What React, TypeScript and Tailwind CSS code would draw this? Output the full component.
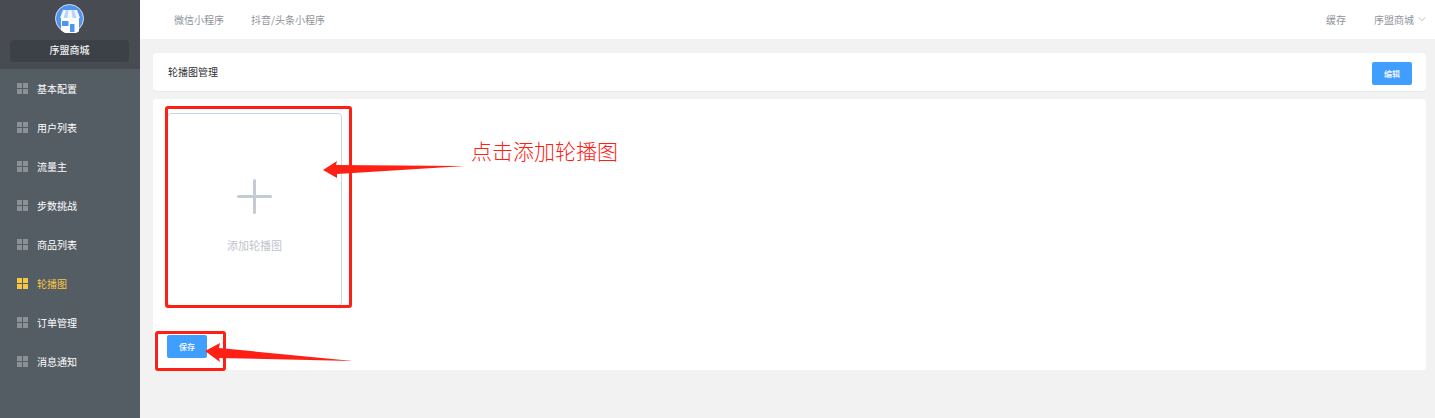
const cjk = "font-['Noto_Sans_CJK_SC','Liberation_Sans',sans-serif]";

const menu = ["基本配置", "用户列表", "流量主", "步数挑战", "商品列表", "轮播图", "订单管理", "消息通知"];

function GridIcon({ active }: { active: boolean }) {
  const cell = active ? "bg-[#f7c744]" : "bg-[#8c9197]";
  return (
    <span className="grid h-[11px] w-[11px] grid-cols-2 gap-px">
      <i className={cell} />
      <i className={cell} />
      <i className={cell} />
      <i className={cell} />
    </span>
  );
}

function Logo() {
  return (
    <svg viewBox="0 0 29 29" className="block h-[29px] w-[29px]">
      <circle cx="14.5" cy="14.5" r="14" fill="#4f94ee" stroke="#d8dde3" strokeWidth="1" />
      <path d="M6 14h18v13.300a14 14 0 0 1-18-1z" fill="#ffffff" />
      <path d="M8 6h14l3 8H5z" fill="#f4f7fd" />
      <path d="M11 6h2.500l-1 8H8.500zM16.500 6H19l2.500 8h-4z" fill="#bcd4f7" />
      <rect x="7" y="17" width="6.500" height="5" fill="#4f94ee" />
      <rect x="15" y="20" width="4.500" height="8" fill="#4f94ee" />
    </svg>
  );
}

function Sidebar() {
  return (
    <aside className="flex w-[140px] shrink-0 flex-col bg-[#545c64]">
      <div className="flex h-[69px] flex-col bg-[#484c52] pl-[10px] pt-1">
        <div className="ml-[45px]">
          <Logo />
        </div>
        <div className="mt-[7px] flex h-[22px] w-[119px] items-center justify-center rounded-sm bg-[#3c4047] pb-[3px] text-[10px] font-medium text-[#f0f0f0]">
          序盟商城
        </div>
      </div>
      <nav className="flex flex-col">
        {menu.map((name) => {
          const active = name === "轮播图";
          return (
            <div
              key={name}
              className={`flex h-[39px] items-center gap-[9px] pl-[17px] text-[10px] ${active ? "text-[#f7c744]" : "text-white"}`}
            >
              <GridIcon active={active} />
              <span>{name}</span>
            </div>
          );
        })}
      </nav>
    </aside>
  );
}

function TopBar() {
  return (
    <header className="flex h-[39px] items-center bg-white pb-px pl-[34px] pr-[9px] text-[10px] text-[#909399]">
      <span>微信小程序</span>
      <span className="ml-[27px]">抖音/头条小程序</span>
      <span className="ml-auto">缓存</span>
      <span className="ml-[28px]">序盟商城</span>
      <svg viewBox="0 0 10 10" className="ml-[4px] h-2 w-2" fill="none" stroke="#a8abb2" strokeWidth="1">
        <path d="M1 3l4 4 4-4" />
      </svg>
    </header>
  );
}

function Content() {
  return (
    <main className="flex flex-1 flex-col gap-2 pl-[13px] pr-[9px] pt-[14px]">
      <section className="flex h-[38px] items-center justify-between rounded-sm bg-white pl-[15px] pr-[14px] text-[10px] text-[#303133] shadow-[0_1px_0_#e8eaee]">
        <span className="pb-[2px]">轮播图管理</span>
        <button className="mt-[3px] h-[23px] w-10 rounded-[2px] bg-[#409eff] text-[8px] font-medium text-white">编辑</button>
      </section>
      <section className="flex h-[271px] flex-col items-start rounded-sm bg-white pl-[14px] pt-[14px]">
        <div className="flex h-[193px] w-[175px] flex-col items-center rounded-sm border border-[#c6d6e8] pt-[65px]">
          <div className="relative h-[35px] w-[35px]">
            <span className="absolute left-0 top-4 h-[3px] w-[35px] rounded-full bg-[#c5cbd3]" />
            <span className="absolute left-4 top-0 h-[35px] w-[3px] rounded-full bg-[#c5cbd3]" />
          </div>
          <span className="mt-[23px] text-[11px] text-[#c0c4cc]">添加轮播图</span>
        </div>
        <button className="mt-[29px] h-[23px] w-10 rounded-[2px] bg-[#409eff] text-[8px] font-medium text-white">保存</button>
      </section>
    </main>
  );
}

function Annotations() {
  return (
    <>
      <div className="absolute left-[165px] top-[106px] h-[202px] w-[187px] rounded-[3px] border-[3px] border-[#ff2015]" />
      <div className="absolute left-[155px] top-[331px] h-[40px] w-[71px] rounded-[3px] border-[3px] border-[#ff2015]" />
      <svg className="absolute left-0 top-0 h-[418px] w-[1435px]" viewBox="0 0 1435 418" fill="#ff2015">
        <path d="M323 170L337 161L336 165L465 166L337 174L337 178z" />
        <path d="M205 351L220 343L219 348L353 361L219 358L220 362z" />
      </svg>
      <span className="absolute left-[471px] top-[135px] text-[21px] font-light leading-[30px] text-[#ff2015]">点击添加轮播图</span>
    </>
  );
}

export default function App() {
  return (
    <div className={`relative flex h-[418px] w-[1435px] overflow-hidden bg-[#f2f2f2] ${cjk}`}>
      <Sidebar />
      <div className="flex flex-1 flex-col">
        <TopBar />
        <Content />
      </div>
      <Annotations />
    </div>
  );
}
